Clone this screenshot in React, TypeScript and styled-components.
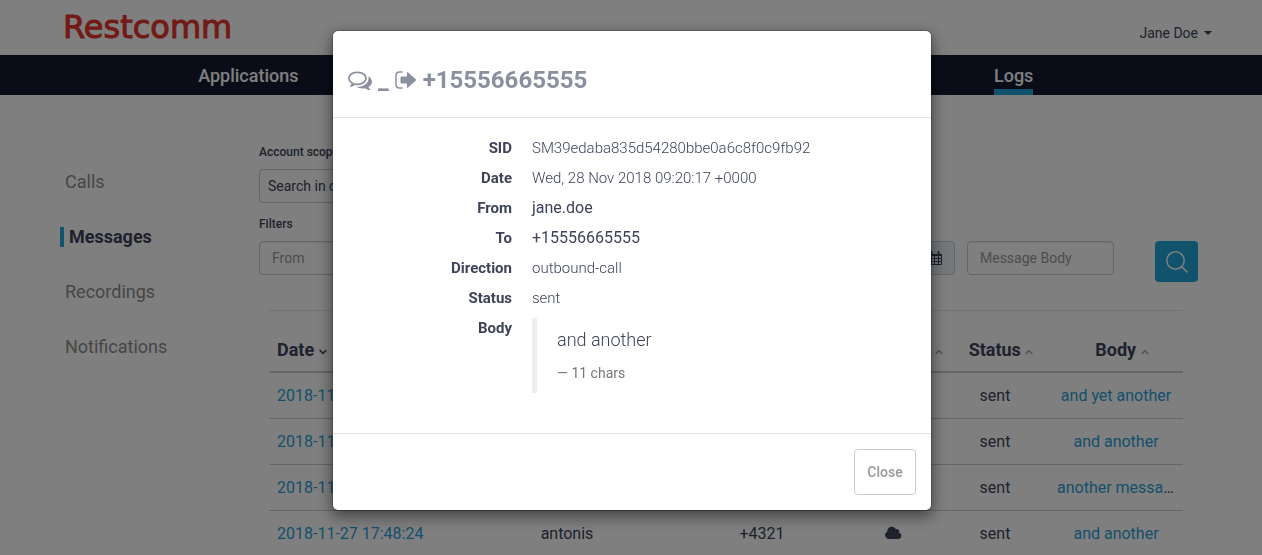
import React from "react";
import styled, { createGlobalStyle } from "styled-components";

const GlobalStyle = createGlobalStyle`
  *, *::before, *::after { box-sizing: border-box; }
  html, body { height: 100%; overflow: hidden; }
  body {
    margin: 0;
    background: #fff;
    color: #3e4359;
    font-family: Roboto, "Open Sans", sans-serif;
    font-size: 16px;
    line-height: 20px;
  }
  button, input, select { font: inherit; color: inherit; }
  a { text-decoration: none; }
`;

const Container = styled.div`
  width: 100%;
  max-width: 1140px;
  margin: 0 auto;
`;

const TopBar = styled(Container)`
  display: flex;
  justify-content: space-between;
  height: 55px;
  padding: 0 0 0 2px;
`;

const Logo = styled.a`
  color: #e5352b;
  font-family: "DejaVu Sans", sans-serif;
  font-size: 32px;
  line-height: 54px;
  -webkit-text-stroke: 1px #e5352b;
`;

const UserMenu = styled.button`
  display: flex;
  align-items: center;
  align-self: flex-end;
  gap: 6px;
  height: 44px;
  margin-right: -11px;
  padding: 0;
  border: 0;
  background: none;
  font-size: 14px;
`;

const Caret = styled.span`
  border: 4px solid transparent;
  border-top-color: currentColor;
  border-bottom: 0;
`;

const NavBar = styled.nav`
  background: #141b31;
`;

const NavList = styled(Container)`
  display: grid;
  grid-template-columns: repeat(3, 1fr);
  gap: 8px;
  justify-items: center;
  height: 40px;
`;

const NavLink = styled.a<{ $last?: boolean; $active?: boolean }>`
  grid-column: ${(p) => (p.$last ? 3 : 1)};
  height: 40px;
  border-bottom: 6px solid ${(p) => (p.$active ? "#22a7d8" : "transparent")};
  color: #fff;
  font-size: 18px;
  font-weight: 500;
  line-height: 42px;
`;

const Body = styled(Container)`
  display: grid;
  grid-template-columns: 198px minmax(0, 1fr);
`;

const SideNav = styled.nav`
  display: flex;
  flex-direction: column;
  gap: 35px;
  margin-left: -1px;
  padding-top: 77px;
`;

const SideLink = styled.a<{ $active?: boolean }>`
  border-left: 4px solid ${(p) => (p.$active ? "#22a7d8" : "transparent")};
  padding-left: ${(p) => (p.$active ? 5 : 1)}px;
  color: ${(p) => (p.$active ? "#3e4359" : "#8c8c8c")};
  font-size: 18px;
  font-weight: ${(p) => (p.$active ? 700 : 400)};
`;

const Main = styled.main`
  padding: 47px 3px 0 0;
`;

const FieldLabel = styled.label`
  display: block;
  margin-bottom: 7px;
  font-size: 12px;
  font-weight: 500;
`;

const ScopeSelect = styled.select`
  display: block;
  width: 260px;
  height: 34px;
  margin-bottom: 11px;
  padding: 0 4px;
  border: 1px solid #ccc;
  border-radius: 4px;
  background: #fff;
  font-size: 14px;
`;

const FilterRow = styled.div`
  display: flex;
  align-items: flex-start;
  gap: 12px;
`;

const Field = styled.input`
  width: 147px;
  height: 34px;
  padding: 0 12px;
  border: 1px solid #ccc;
  border-radius: 4px;
  background: #fff;
  box-shadow: inset 0 1px 1px rgba(0, 0, 0, 0.08);
  font-size: 14px;
  &::placeholder { color: #999; opacity: 1; }
`;

const DateGroup = styled.div`
  display: flex;
  flex: 1;
  justify-content: flex-end;
`;

const AddonButton = styled.button`
  width: 40px;
  height: 34px;
  padding: 0 12px;
  border: 1px solid #ccc;
  border-radius: 0 4px 4px 0;
  background: #e9f0f6;
  svg { display: block; }
`;

const SearchButton = styled.button`
  display: grid;
  place-items: center;
  width: 43px;
  height: 41px;
  margin-left: 29px;
  padding: 0;
  border: 0;
  border-radius: 4px;
  background: #22a7d8;
  color: #fff;
`;

const Results = styled.section`
  margin: 28px 15px 0 10px;
  border-top: 1px solid #e4e4e4;
`;

const Table = styled.table`
  width: 100%;
  margin-top: 17px;
  border-collapse: collapse;
  table-layout: fixed;
`;

const Col = styled.col<{ $w?: number }>`
  width: ${(p) => (p.$w ? `${p.$w}px` : "auto")};
`;

const HeadCell = styled.th<{ $first?: boolean }>`
  height: 44px;
  padding: ${(p) => (p.$first ? "0 8px" : "0 0 0 12px")};
  border-bottom: 2px solid #ccc;
  font-size: 18px;
  font-weight: 700;
  text-align: ${(p) => (p.$first ? "left" : "center")};
  white-space: nowrap;
`;

const Cell = styled.td<{ $first?: boolean }>`
  height: 46px;
  padding: 2px 8px 0;
  border-bottom: 1px solid #ccc;
  text-align: ${(p) => (p.$first ? "left" : "center")};
  overflow: hidden;
  text-overflow: ellipsis;
  white-space: nowrap;
`;

const RowLink = styled.a`
  color: #2a9fd8;
`;

const Overlay = styled.div`
  position: fixed;
  inset: 0;
  padding: 30px 0 0 2px;
  background: rgba(0, 0, 0, 0.5);
`;

const Dialog = styled.div`
  width: 100%;
  max-width: 600px;
  margin: 0 auto;
  border: 1px solid rgba(0, 0, 0, 0.2);
  border-radius: 6px;
  background: #fff;
  background-clip: padding-box;
  box-shadow: 0 5px 15px rgba(0, 0, 0, 0.5);
`;

const DialogHeader = styled.header`
  display: flex;
  align-items: center;
  height: 87px;
  padding: 11px 15px 0;
  border-bottom: 1px solid #e5e5e5;
  color: #8b909f;
`;

const DialogTitle = styled.h3`
  display: flex;
  align-items: center;
  gap: 6px;
  margin: 0;
  font-size: 24px;
  font-weight: 700;
  line-height: 26px;
`;

const Details = styled.dl`
  display: grid;
  grid-template-columns: 164px minmax(0, 1fr);
  column-gap: 20px;
  margin: 0;
  padding: 15px 15px 40px;
  font-size: 15px;
  line-height: 30px;
`;

const Term = styled.dt`
  font-weight: 700;
  text-align: right;
`;

const Value = styled.dd<{ $large?: boolean }>`
  margin: 0;
  font-size: ${(p) => (p.$large ? 16 : 15)}px;
  font-weight: ${(p) => (p.$large ? 400 : 300)};
`;

const Quote = styled.blockquote`
  height: 75px;
  margin: 5px 0 0;
  padding: 10px 20px;
  border-left: 5px solid #eee;
  font-size: 18px;
  line-height: 24px;
`;

const QuoteText = styled.p`
  margin: 0 0 11px;
`;

const QuoteNote = styled.small`
  display: block;
  color: #777;
  font-size: 14px;
  font-weight: 400;
  line-height: 20px;
`;

const DialogFooter = styled.footer`
  display: flex;
  justify-content: flex-end;
  padding: 15px;
  border-top: 1px solid #e5e5e5;
`;

const CloseButton = styled.button`
  min-width: 62px;
  height: 46px;
  padding: 0 12px;
  border: 1px solid #ccc;
  border-radius: 4px;
  background: #fff;
  color: #999;
  font-size: 14px;
  font-weight: 500;
`;

const CommentsIcon = () => (
  <svg width="24" height="24" viewBox="0 0 1792 1792" fill="currentColor" aria-hidden="true">
    <path d="M704 384q-153 0-286 52t-211.5 141-78.5 191q0 82 53 158t149 132l97 56-35 84q34-20 62-39l44-31 53 10q78 14 153 14 153 0 286-52t211.5-141 78.5-191-78.5-191-211.5-141-286-52zm0-128q191 0 353.5 68.5t256.5 186.5 94 257-94 257-256.5 186.5-353.5 68.5q-86 0-176-16-124 88-278 128-36 9-86 16h-3q-11 0-20.5-8t-11.5-21q-1-3-1-6.5t.5-6.5 2-6l2.5-5 3.5-5.5 4-5 4.5-5 4-4.5q5-6 23-25t26-29.5 22.5-29 25-38.5 20.5-44q-124-72-195-177t-71-224q0-139 94-257t256.5-186.5 353.5-68.5zm822 1169q10 24 20.5 44t25 38.5 22.5 29 26 29.5 23 25q1 1 4 4.5t4.5 5 4 5 3.5 5.5l2.5 5 2 6 .5 6.5-1 6.5q-3 14-13 22t-22 7q-50-7-86-16-154-40-278-128-90 16-176 16-271 0-472-132 58 4 88 4 161 0 309-45t264-129q125-92 192-212t67-254q0-77-23-152 129 71 204 178t75 230q0 120-71 224.5t-195 176.5z" />
  </svg>
);

const SignOutIcon = () => (
  <svg width="22" height="18" viewBox="0 0 22 18" fill="none" aria-hidden="true">
    <path d="M7 1H4.500Q1 1 1 4.500V13.500Q1 17 4.500 17H7" stroke="currentColor" strokeWidth="1.500" strokeLinecap="round" />
    <path d="M5.500 6.200q0-.8.800-.8H12V1.700q0-1.100.9-.4l7.800 7q.7.700 0 1.400l-7.800 7q-.9.700-.9-.4V12.600H6.300q-.8 0-.8-.8z" fill="currentColor" />
  </svg>
);

const CalendarIcon = () => (
  <svg width="14" height="14" viewBox="0 0 14 14" fill="none" stroke="currentColor" aria-hidden="true">
    <path d="M.5 3.500h13v10H.5zM.5 7.500h13M.5 10.500h13M3.500 5v8.500M6.500 5v8.500M10.500 5v8.500" />
    <path d="M0 4h14" strokeWidth="2" />
    <path d="M3.500 1v2.500M10.500 1v2.500" strokeWidth="2" strokeLinecap="round" />
  </svg>
);

const CloudIcon = () => (
  <svg width="17" height="13" viewBox="0 0 17 13" fill="currentColor" aria-hidden="true">
    <path d="M4 13A4 4 0 0 1 2.300 5.400V5A4.600 4.600 0 0 1 11 3.200 2.400 2.400 0 0 1 14 6.400 3.400 3.400 0 0 1 13.600 13z" />
  </svg>
);

const SearchIcon = () => (
  <svg width="22" height="22" viewBox="0 0 22 22" fill="none" stroke="currentColor" strokeWidth="1.500" aria-hidden="true">
    <circle cx="9.500" cy="9.500" r="8.700" />
    <path d="M15.700 15.700 21.400 21.400" />
  </svg>
);

const SortIcon = ({ down }: { down?: boolean }) => (
  <svg width="8" height="7" viewBox="0 0 8 7" fill="none" strokeWidth="1.600" stroke={down ? "#3e4359" : "#aaa"} aria-hidden="true">
    <path d={down ? "M.7 1 4 4.300 7.300 1" : "M.7 5 4 1.700 7.300 5"} />
  </svg>
);

const columns = ["Date", "From", "To", "Direction", "Status", "Body"];

const messages = [
  { date: "2018-11-28 09:21:02", from: "jane.doe", to: "+4321", body: "and yet another" },
  { date: "2018-11-28 09:20:17", from: "jane.doe", to: "+4321", body: "and another" },
  { date: "2018-11-28 09:19:40", from: "jane.doe", to: "+4321", body: "another messa..." },
  { date: "2018-11-27 17:48:24", from: "antonis", to: "+4321", body: "and another" },
];

const details = [
  { term: "SID", value: "SM39edaba835d54280bbe0a6c8f0c9fb92" },
  { term: "Date", value: "Wed, 28 Nov 2018 09:20:17 +0000" },
  { term: "From", value: "jane.doe", large: true },
  { term: "To", value: "+15556665555", large: true },
  { term: "Direction", value: "outbound-call" },
  { term: "Status", value: "sent" },
];

export default function App() {
  return (
    <>
      <GlobalStyle />
      <TopBar as="header">
        <Logo href="#">Restcomm</Logo>
        <UserMenu type="button">Jane Doe<Caret /></UserMenu>
      </TopBar>
      <NavBar>
        <NavList>
          <NavLink href="#applications">Applications</NavLink>
          <NavLink href="#logs" $last $active>Logs</NavLink>
        </NavList>
      </NavBar>
      <Body>
        <SideNav>
          <SideLink href="#calls">Calls</SideLink>
          <SideLink href="#messages" $active>Messages</SideLink>
          <SideLink href="#recordings">Recordings</SideLink>
          <SideLink href="#notifications">Notifications</SideLink>
        </SideNav>
        <Main>
          <FieldLabel htmlFor="scope">Account scope</FieldLabel>
          <ScopeSelect id="scope"><option>Search in current account</option></ScopeSelect>
          <FieldLabel htmlFor="from">Filters</FieldLabel>
          <FilterRow>
            <Field id="from" placeholder="From" />
            <DateGroup>
              <AddonButton type="button" aria-label="Pick a date"><CalendarIcon /></AddonButton>
            </DateGroup>
            <Field placeholder="Message Body" aria-label="Message body" />
            <SearchButton type="button" aria-label="Search"><SearchIcon /></SearchButton>
          </FilterRow>
          <Results>
            <Table>
              <colgroup>
                <Col /><Col $w={224} /><Col $w={166} /><Col $w={96} /><Col $w={108} /><Col $w={134} />
              </colgroup>
              <thead>
                <tr>
                  {columns.map((name, i) => (
                    <HeadCell key={name} $first={i === 0}>{name} <SortIcon down={i === 0} /></HeadCell>
                  ))}
                </tr>
              </thead>
              <tbody>
                {messages.map((m) => (
                  <tr key={m.date}>
                    <Cell $first><RowLink href="#message">{m.date}</RowLink></Cell>
                    <Cell>{m.from}</Cell>
                    <Cell>{m.to}</Cell>
                    <Cell><CloudIcon /></Cell>
                    <Cell>sent</Cell>
                    <Cell><RowLink href="#message">{m.body}</RowLink></Cell>
                  </tr>
                ))}
              </tbody>
            </Table>
          </Results>
        </Main>
      </Body>
      <Overlay>
        <Dialog role="dialog" aria-modal="true" aria-labelledby="dialog-title">
          <DialogHeader>
            <DialogTitle id="dialog-title">
              <CommentsIcon /><span>_</span><SignOutIcon /><span>+15556665555</span>
            </DialogTitle>
          </DialogHeader>
          <Details>
            {details.map((d) => (
              <React.Fragment key={d.term}>
                <Term>{d.term}</Term>
                <Value $large={d.large}>{d.value}</Value>
              </React.Fragment>
            ))}
            <Term>Body</Term>
            <Value>
              <Quote>
                <QuoteText>and another</QuoteText>
                <QuoteNote>— 11 chars</QuoteNote>
              </Quote>
            </Value>
          </Details>
          <DialogFooter>
            <CloseButton type="button">Close</CloseButton>
          </DialogFooter>
        </Dialog>
      </Overlay>
    </>
  );
}
